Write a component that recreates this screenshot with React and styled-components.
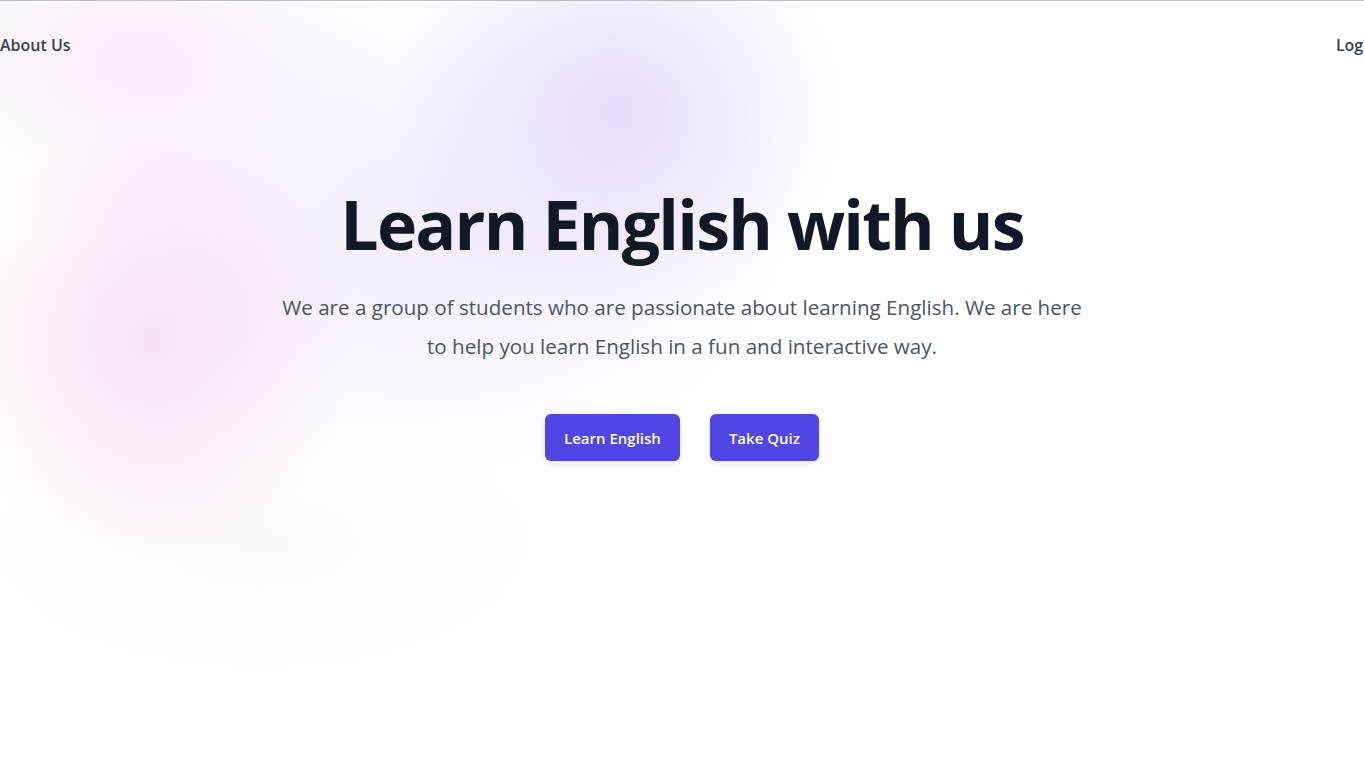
import React from 'react';
import styled, { createGlobalStyle } from 'styled-components';

const GlobalStyle = createGlobalStyle`
  html, body {
    margin: 0;
    padding: 0;
    background: #ffffff;
    overflow: hidden;
  }
  body {
    font-family: 'Open Sans', 'Noto Sans', 'Liberation Sans', sans-serif;
  }
`;

const Page = styled.div`
  min-height: 767px;
  border-top: 1px solid #b9c0d6;
  box-sizing: border-box;
  background-color: #ffffff;
  background-image:
    radial-gradient(ellipse 320px 300px at 620px 110px, rgba(226, 214, 248, 0.8), rgba(226, 214, 248, 0) 72%),
    radial-gradient(ellipse 280px 300px at 150px 340px, rgba(244, 216, 240, 0.75), rgba(244, 216, 240, 0) 74%),
    radial-gradient(ellipse 480px 320px at 430px 230px, rgba(240, 232, 252, 0.85), rgba(240, 232, 252, 0) 78%),
    radial-gradient(ellipse 340px 240px at 140px 60px, rgba(248, 234, 250, 0.85), rgba(248, 234, 250, 0) 76%),
    radial-gradient(ellipse 420px 200px at 260px 540px, rgba(250, 245, 252, 0.7), rgba(250, 245, 252, 0) 75%);
`;

const Nav = styled.nav`
  display: flex;
  justify-content: space-between;
  align-items: center;
  width: calc(100% + 18px);
  height: 88px;
`;

const NavLink = styled.a`
  font-size: 16px;
  font-weight: 600;
  color: #374151;
  text-decoration: none;
  line-height: 24px;
`;

const Hero = styled.section`
  display: flex;
  flex-direction: column;
  align-items: center;
  text-align: center;
  padding-top: 90px;
`;

const Title = styled.h1`
  margin: 0;
  font-size: 68px;
  font-weight: 700;
  letter-spacing: -1.8px;
  line-height: 90px;
  color: #111827;
`;

const Lead = styled.p`
  margin: 19px 0 0;
  max-width: 815px;
  font-size: 20.6px;
  line-height: 39px;
  color: #4b5563;
`;

const Actions = styled.div`
  display: flex;
  gap: 30px;
  margin-top: 48px;
`;

const Button = styled.a`
  display: inline-flex;
  align-items: center;
  justify-content: center;
  height: 47px;
  padding: 0 19px;
  box-sizing: border-box;
  border-radius: 6px;
  background: #4f46e5;
  color: #ffffff;
  font-size: 15px;
  font-weight: 600;
  text-decoration: none;
  box-shadow: 0 2px 6px rgba(79, 70, 229, 0.15);
`;

export default function App() {
  return (
    <>
      <GlobalStyle />
      <Page>
        <Nav>
          <NavLink href="#">About Us</NavLink>
          <NavLink href="#">Log in</NavLink>
        </Nav>
        <Hero>
          <Title>Learn English with us</Title>
          <Lead>
            We are a group of students who are passionate about learning English. We are here
            to help you learn English in a fun and interactive way.
          </Lead>
          <Actions>
            <Button href="#">Learn English</Button>
            <Button href="#">Take Quiz</Button>
          </Actions>
        </Hero>
      </Page>
    </>
  );
}
